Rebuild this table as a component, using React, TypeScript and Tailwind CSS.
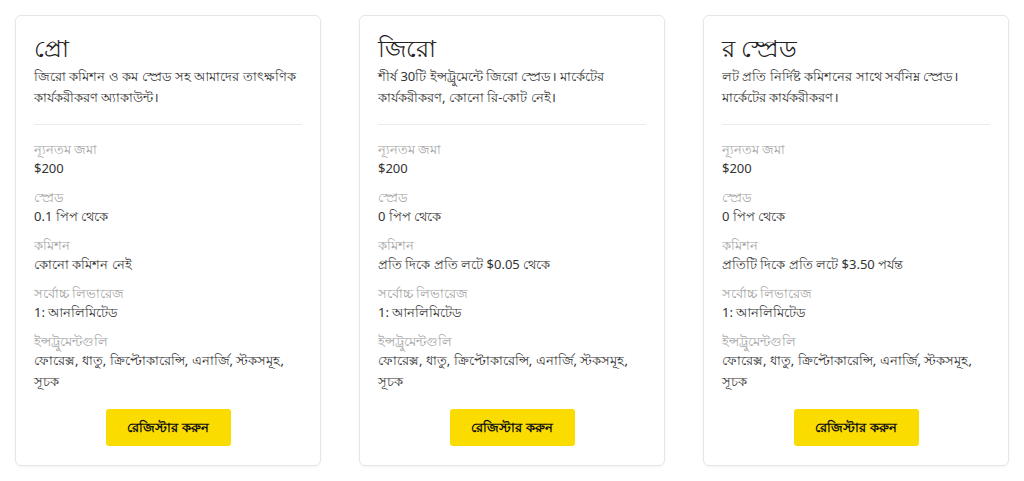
import React from "react";

type Card = {
  title: string;
  desc: string[];
  rows: { label: string; value: string[] }[];
};

const cards: Card[] = [
  {
    title: "প্রো",
    desc: ["জিরো কমিশন ও কম স্প্রেড সহ আমাদের তাৎক্ষণিক", "কার্যকরীকরণ অ্যাকাউন্ট।"],
    rows: [
      { label: "ন্যূনতম জমা", value: ["$200"] },
      { label: "স্প্রেড", value: ["0.1 পিপ থেকে"] },
      { label: "কমিশন", value: ["কোনো কমিশন নেই"] },
      { label: "সর্বোচ্চ লিভারেজ", value: ["1: আনলিমিটেড"] },
      { label: "ইন্সট্রুমেন্টগুলি", value: ["ফোরেক্স, ধাতু, ক্রিপ্টোকারেন্সি, এনার্জি, স্টকসমূহ,", "সূচক"] },
    ],
  },
  {
    title: "জিরো",
    desc: ["শীর্ষ 30টি ইন্সট্রুমেন্টে জিরো স্প্রেড। মার্কেটের", "কার্যকরীকরণ, কোনো রি-কোট নেই।"],
    rows: [
      { label: "ন্যূনতম জমা", value: ["$200"] },
      { label: "স্প্রেড", value: ["0 পিপ থেকে"] },
      { label: "কমিশন", value: ["প্রতি দিকে প্রতি লটে $0.05 থেকে"] },
      { label: "সর্বোচ্চ লিভারেজ", value: ["1: আনলিমিটেড"] },
      { label: "ইন্সট্রুমেন্টগুলি", value: ["ফোরেক্স, ধাতু, ক্রিপ্টোকারেন্সি, এনার্জি, স্টকসমূহ,", "সূচক"] },
    ],
  },
  {
    title: "র স্প্রেড",
    desc: ["লট প্রতি নির্দিষ্ট কমিশনের সাথে সর্বনিম্ন স্প্রেড।", "মার্কেটের কার্যকরীকরণ।"],
    rows: [
      { label: "ন্যূনতম জমা", value: ["$200"] },
      { label: "স্প্রেড", value: ["0 পিপ থেকে"] },
      { label: "কমিশন", value: ["প্রতিটি দিকে প্রতি লটে $3.50 পর্যন্ত"] },
      { label: "সর্বোচ্চ লিভারেজ", value: ["1: আনলিমিটেড"] },
      { label: "ইন্সট্রুমেন্টগুলি", value: ["ফোরেক্স, ধাতু, ক্রিপ্টোকারেন্সি, এনার্জি, স্টকসমূহ,", "সূচক"] },
    ],
  },
];

export default function App() {
  return (
    <div
      className="w-[1024px] h-[481px] bg-white flex gap-[38px] pl-[15px] pt-[15px]"
      style={{ fontFamily: '"Noto Sans", "Open Sans", sans-serif' }}
    >
      {cards.map((c) => (
        <div
          key={c.title}
          className="w-[306px] h-[451px] border border-[#e6e6e6] rounded-[6px] shadow-[0_1px_3px_rgba(0,0,0,0.05)] px-[18px] pt-[17px] flex flex-col"
        >
          <div className="text-[24px] leading-[30px] text-[#222]">{c.title}</div>
          <div className="mt-[3px] text-[13px] leading-[21px] text-[#333] whitespace-nowrap">
            {c.desc.map((d) => (
              <div key={d}>{d}</div>
            ))}
          </div>
          <div className="mt-[16px] h-px bg-[#ebebeb]" />
          <div className="mt-[15px] flex flex-col gap-[9px]">
            {c.rows.map((r) => (
              <div key={r.label} className="flex flex-col">
                <div className="text-[13px] leading-[18px] text-[#a3a3a3]">{r.label}</div>
                <div className="text-[13px] leading-[21px] text-[#333] whitespace-nowrap">
                  {r.value.map((v) => (
                    <div key={v}>{v}</div>
                  ))}
                </div>
              </div>
            ))}
          </div>
          <div className="mt-[17px] flex justify-center">
            <button className="w-[125px] h-[37px] bg-[#fadc00] rounded-[3px] text-[13px] font-semibold text-[#111]">
              রেজিস্টার করুন
            </button>
          </div>
        </div>
      ))}
    </div>
  );
}
